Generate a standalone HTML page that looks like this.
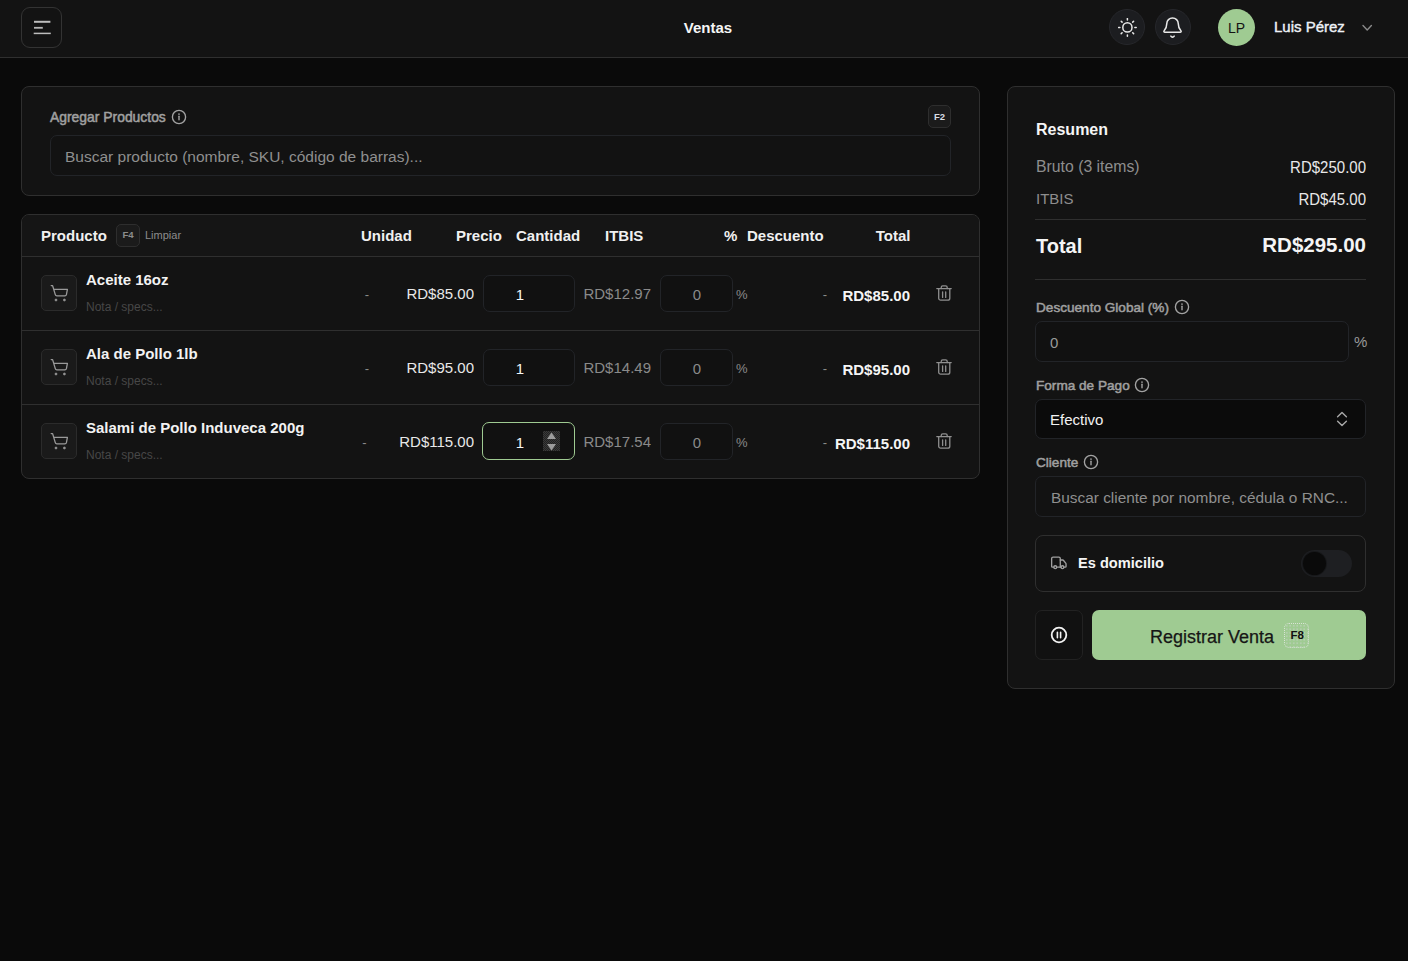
<!DOCTYPE html>
<html><head><meta charset="utf-8"><title>Ventas</title>
<style>
html,body{margin:0;padding:0;}
body{width:1408px;height:961px;overflow:hidden;background:#0a0a0a;position:relative;font-family:"Liberation Sans",sans-serif;}
.t{position:absolute;line-height:1;white-space:nowrap;}
.b{position:absolute;}
</style></head><body>
<div class="b" style="left:0px;top:0px;width:1408px;height:57px;background:#131313;"></div>
<div class="b" style="left:0px;top:57px;width:1408px;height:1px;background:#2f2f2f;"></div>
<div class="b" style="left:21px;top:7px;width:41px;height:41px;border:1px solid #333;border-radius:9px;box-sizing:border-box;"></div>
<svg class="b" style="left:33px;top:19px;" width="19" height="18" viewBox="0 0 19 18" fill="none"><path d="M1 2.8H17.4" stroke="#bdbdbd" stroke-width="2"/><path d="M1 8.8H9.8" stroke="#b5b5b5" stroke-width="1.8"/><path d="M0.7 14.4H17.8" stroke="#bdbdbd" stroke-width="1.5"/></svg>
<div class="t" style="left:708px;transform:translateX(-50%) ;top:20.00px;font-size:15px;font-weight:700;color:#f5f5f5;">Ventas</div>
<div class="b" style="left:1109px;top:9px;width:36px;height:36px;background:#1c1d20;border:1px solid #26272b;border-radius:50%;box-sizing:border-box;"></div>
<svg class="b" style="left:1118px;top:18px;" width="20" height="20" viewBox="0 0 20 20" fill="none"><circle cx="9.4" cy="9.4" r="4.6" stroke="#e8e8e8" stroke-width="1.5"/><line x1="16.90" y1="9.40" x2="18.20" y2="9.40" stroke="#e8e8e8" stroke-width="1.5" stroke-linecap="round"/><line x1="14.70" y1="14.70" x2="15.62" y2="15.62" stroke="#e8e8e8" stroke-width="1.5" stroke-linecap="round"/><line x1="9.40" y1="16.90" x2="9.40" y2="18.20" stroke="#e8e8e8" stroke-width="1.5" stroke-linecap="round"/><line x1="4.10" y1="14.70" x2="3.18" y2="15.62" stroke="#e8e8e8" stroke-width="1.5" stroke-linecap="round"/><line x1="1.90" y1="9.40" x2="0.60" y2="9.40" stroke="#e8e8e8" stroke-width="1.5" stroke-linecap="round"/><line x1="4.10" y1="4.10" x2="3.18" y2="3.18" stroke="#e8e8e8" stroke-width="1.5" stroke-linecap="round"/><line x1="9.40" y1="1.90" x2="9.40" y2="0.60" stroke="#e8e8e8" stroke-width="1.5" stroke-linecap="round"/><line x1="14.70" y1="4.10" x2="15.62" y2="3.18" stroke="#e8e8e8" stroke-width="1.5" stroke-linecap="round"/></svg>
<div class="b" style="left:1155px;top:9px;width:36px;height:36px;background:#1c1d20;border:1px solid #26272b;border-radius:50%;box-sizing:border-box;"></div>
<svg class="b" style="left:1160.8px;top:15.6px;" width="24" height="24" viewBox="0 0 24 24" fill="none"><g transform="scale(0.96)" stroke="#e8e8e8" stroke-width="1.6" stroke-linecap="round" stroke-linejoin="round"><path d="M10.268 21a2 2 0 0 0 3.464 0"/><path d="M3.262 15.326A1 1 0 0 0 4 17h16a1 1 0 0 0 .74-1.673C19.41 13.956 18 12.499 18 8A6 6 0 0 0 6 8c0 4.499-1.411 5.956-2.738 7.326"/></g></svg>
<div class="b" style="left:1218px;top:9px;width:37px;height:37px;background:#9fcb92;border-radius:50%;"></div>
<div class="t" style="left:1236.5px;transform:translateX(-50%) ;top:20.75px;font-size:14px;font-weight:400;color:#141414;">LP</div>
<div class="t" style="left:1274px;top:19.20px;font-size:15px;font-weight:400;color:#eef2f7;-webkit-text-stroke:0.4px #eef2f7;">Luis Pérez</div>
<svg class="b" style="left:1360px;top:22px;" width="14" height="12" viewBox="0 0 14 12" fill="none"><path d="M3 3.6L7.2 7.9L11.4 3.6" stroke="#8a8a8a" stroke-width="1.4" stroke-linecap="round" stroke-linejoin="round"/></svg>
<div class="b" style="left:21px;top:86px;width:959px;height:110px;background:#131313;border:1px solid #2f2f2f;border-radius:8px;box-sizing:border-box;"></div>
<div class="t" style="left:50px;top:110.93px;font-size:13.9px;font-weight:400;color:#a0a0a0;-webkit-text-stroke:0.5px #a0a0a0;">Agregar Productos</div>
<svg class="b" style="left:171px;top:109px;" width="16" height="16" viewBox="0 0 16 16" fill="none"><circle cx="8" cy="8" r="6.6" stroke="#a3a3a3" stroke-width="1.35"/><line x1="8" y1="7.3" x2="8" y2="10.8" stroke="#a3a3a3" stroke-width="1.4" stroke-linecap="round"/><circle cx="8" cy="5.1" r="0.85" fill="#a3a3a3"/></svg>
<div class="b" style="left:928px;top:105px;width:23px;height:23px;background:#1b1b1b;border:1px solid #2e2e2e;border-radius:5px;box-sizing:border-box;"></div>
<div class="t" style="left:939.5px;transform:translateX(-50%) ;top:112.16px;font-size:9.5px;font-weight:700;color:#d8dde5;">F2</div>
<div class="b" style="left:50px;top:135px;width:901px;height:41px;background:#121212;border:1px solid #222428;border-radius:7px;box-sizing:border-box;"></div>
<div class="t" style="left:65px;top:149.08px;font-size:15.5px;font-weight:400;color:#8f8f8f;">Buscar producto (nombre, SKU, código de barras)...</div>
<div class="b" style="left:21px;top:214px;width:959px;height:265px;background:#131313;border:1px solid #2f2f2f;border-radius:8px;box-sizing:border-box;"></div>
<div class="b" style="left:22px;top:215px;width:957px;height:41px;background:#151515;border-radius:7px 7px 0 0;"></div>
<div class="b" style="left:22px;top:256px;width:957px;height:1px;background:#2f2f2f;"></div>
<div class="b" style="left:22px;top:330px;width:957px;height:1px;background:#2f2f2f;"></div>
<div class="b" style="left:22px;top:404px;width:957px;height:1px;background:#2f2f2f;"></div>
<div class="t" style="left:41px;top:227.80px;font-size:15px;font-weight:700;color:#f0f0f0;">Producto</div>
<div class="b" style="left:116px;top:224px;width:24px;height:23px;background:#1b1b1b;border:1px solid #2e2e2e;border-radius:5px;box-sizing:border-box;"></div>
<div class="t" style="left:128px;transform:translateX(-50%) ;top:230.47px;font-size:9.6px;font-weight:700;color:#8c8c8c;">F4</div>
<div class="t" style="left:145px;top:230.19px;font-size:11px;font-weight:400;color:#8c8c8c;">Limpiar</div>
<div class="t" style="left:361px;top:227.80px;font-size:15px;font-weight:700;color:#f0f0f0;">Unidad</div>
<div class="t" style="left:456px;top:227.80px;font-size:15px;font-weight:700;color:#f0f0f0;">Precio</div>
<div class="t" style="left:516px;top:227.80px;font-size:15px;font-weight:700;color:#f0f0f0;">Cantidad</div>
<div class="t" style="left:605px;top:227.80px;font-size:15px;font-weight:700;color:#f0f0f0;">ITBIS</div>
<div class="t" style="left:724px;top:227.80px;font-size:15px;font-weight:700;color:#f0f0f0;">%</div>
<div class="t" style="left:747px;top:227.80px;font-size:15px;font-weight:700;color:#f0f0f0;">Descuento</div>
<div class="t" style="right:497.5px;top:227.80px;font-size:15px;font-weight:700;color:#f0f0f0;">Total</div>
<div class="b" style="left:41px;top:275px;width:36px;height:36px;background:#1a1a1a;border:1px solid #2b2b2b;border-radius:5px;box-sizing:border-box;"></div>
<svg class="b" style="left:41px;top:275px;" width="36" height="36" viewBox="0 0 36 36" fill="none"><path d="M10.2 10.6H11.6L14.3 19.6Q14.6 20.9 15.9 20.9H23.9Q25.1 20.9 25.4 19.7L26.4 14.4H13.3" stroke="#9a9a9a" stroke-width="1.3" stroke-linecap="round" stroke-linejoin="round"/><circle cx="15" cy="25" r="1.05" fill="#9a9a9a" stroke="#9a9a9a" stroke-width="0.6"/><circle cx="23.4" cy="25" r="1.05" fill="#9a9a9a" stroke="#9a9a9a" stroke-width="0.6"/></svg>
<div class="t" style="left:86px;top:272.30px;font-size:15px;font-weight:700;color:#f2f2f2;">Aceite 16oz</div>
<div class="t" style="left:86px;top:301.24px;font-size:12px;font-weight:400;color:#474747;">Nota / specs...</div>
<div class="t" style="left:367px;transform:translateX(-50%) ;top:288.00px;font-size:13px;font-weight:400;color:#8a8a8a;">-</div>
<div class="t" style="right:934px;transform:scaleY(1.03);top:286.00px;font-size:15px;font-weight:400;color:#e8e8e8;transform-origin:50% 12.70px;">RD$85.00</div>
<div class="b" style="left:483px;top:275px;width:92px;height:37px;background:#111111;border:1px solid #222428;border-radius:7px;box-sizing:border-box;"></div>
<div class="t" style="left:520px;transform:translateX(-50%) ;top:287.30px;font-size:15px;font-weight:400;color:#f5f5f5;">1</div>
<div class="t" style="right:757px;transform:scaleY(1.03);top:286.00px;font-size:15px;font-weight:400;color:#8a8a8a;transform-origin:50% 12.70px;">RD$12.97</div>
<div class="b" style="left:660px;top:275px;width:73px;height:37px;background:#111111;border:1px solid #222428;border-radius:7px;box-sizing:border-box;"></div>
<div class="t" style="left:697px;transform:translateX(-50%) ;top:287.30px;font-size:15px;font-weight:400;color:#8a8a8a;">0</div>
<div class="t" style="left:736px;top:288.00px;font-size:13px;font-weight:400;color:#8a8a8a;">%</div>
<div class="t" style="left:825px;transform:translateX(-50%) ;top:288.00px;font-size:13px;font-weight:400;color:#8a8a8a;">-</div>
<div class="t" style="right:498px;top:287.80px;font-size:15px;font-weight:700;color:#f5f5f5;">RD$85.00</div>
<svg class="b" style="left:934px;top:283px;" width="20" height="20" viewBox="0 0 20 20" fill="none"><g stroke="#8f8f8f" stroke-width="1.3" stroke-linecap="round" stroke-linejoin="round"><path d="M2.8 5.6H17.2"/><path d="M7.2 5.6V4.5A1.6 1.6 0 0 1 8.8 2.9H11.6A1.6 1.6 0 0 1 13.2 4.5V5.6"/><path d="M4.7 5.6V15.2A2 2 0 0 0 6.7 17.2H13.8A2 2 0 0 0 15.8 15.2V5.6"/><path d="M8.6 8.8V14.4M11.7 8.8V14.4"/></g></svg>
<div class="b" style="left:41px;top:349px;width:36px;height:36px;background:#1a1a1a;border:1px solid #2b2b2b;border-radius:5px;box-sizing:border-box;"></div>
<svg class="b" style="left:41px;top:349px;" width="36" height="36" viewBox="0 0 36 36" fill="none"><path d="M10.2 10.6H11.6L14.3 19.6Q14.6 20.9 15.9 20.9H23.9Q25.1 20.9 25.4 19.7L26.4 14.4H13.3" stroke="#9a9a9a" stroke-width="1.3" stroke-linecap="round" stroke-linejoin="round"/><circle cx="15" cy="25" r="1.05" fill="#9a9a9a" stroke="#9a9a9a" stroke-width="0.6"/><circle cx="23.4" cy="25" r="1.05" fill="#9a9a9a" stroke="#9a9a9a" stroke-width="0.6"/></svg>
<div class="t" style="left:86px;top:346.30px;font-size:15px;font-weight:700;color:#f2f2f2;">Ala de Pollo 1lb</div>
<div class="t" style="left:86px;top:375.24px;font-size:12px;font-weight:400;color:#474747;">Nota / specs...</div>
<div class="t" style="left:367px;transform:translateX(-50%) ;top:362.00px;font-size:13px;font-weight:400;color:#8a8a8a;">-</div>
<div class="t" style="right:934px;transform:scaleY(1.03);top:360.00px;font-size:15px;font-weight:400;color:#e8e8e8;transform-origin:50% 12.70px;">RD$95.00</div>
<div class="b" style="left:483px;top:349px;width:92px;height:37px;background:#111111;border:1px solid #222428;border-radius:7px;box-sizing:border-box;"></div>
<div class="t" style="left:520px;transform:translateX(-50%) ;top:361.30px;font-size:15px;font-weight:400;color:#f5f5f5;">1</div>
<div class="t" style="right:757px;transform:scaleY(1.03);top:360.00px;font-size:15px;font-weight:400;color:#8a8a8a;transform-origin:50% 12.70px;">RD$14.49</div>
<div class="b" style="left:660px;top:349px;width:73px;height:37px;background:#111111;border:1px solid #222428;border-radius:7px;box-sizing:border-box;"></div>
<div class="t" style="left:697px;transform:translateX(-50%) ;top:361.30px;font-size:15px;font-weight:400;color:#8a8a8a;">0</div>
<div class="t" style="left:736px;top:362.00px;font-size:13px;font-weight:400;color:#8a8a8a;">%</div>
<div class="t" style="left:825px;transform:translateX(-50%) ;top:362.00px;font-size:13px;font-weight:400;color:#8a8a8a;">-</div>
<div class="t" style="right:498px;top:361.80px;font-size:15px;font-weight:700;color:#f5f5f5;">RD$95.00</div>
<svg class="b" style="left:934px;top:357px;" width="20" height="20" viewBox="0 0 20 20" fill="none"><g stroke="#8f8f8f" stroke-width="1.3" stroke-linecap="round" stroke-linejoin="round"><path d="M2.8 5.6H17.2"/><path d="M7.2 5.6V4.5A1.6 1.6 0 0 1 8.8 2.9H11.6A1.6 1.6 0 0 1 13.2 4.5V5.6"/><path d="M4.7 5.6V15.2A2 2 0 0 0 6.7 17.2H13.8A2 2 0 0 0 15.8 15.2V5.6"/><path d="M8.6 8.8V14.4M11.7 8.8V14.4"/></g></svg>
<div class="b" style="left:41px;top:423px;width:36px;height:36px;background:#1a1a1a;border:1px solid #2b2b2b;border-radius:5px;box-sizing:border-box;"></div>
<svg class="b" style="left:41px;top:423px;" width="36" height="36" viewBox="0 0 36 36" fill="none"><path d="M10.2 10.6H11.6L14.3 19.6Q14.6 20.9 15.9 20.9H23.9Q25.1 20.9 25.4 19.7L26.4 14.4H13.3" stroke="#9a9a9a" stroke-width="1.3" stroke-linecap="round" stroke-linejoin="round"/><circle cx="15" cy="25" r="1.05" fill="#9a9a9a" stroke="#9a9a9a" stroke-width="0.6"/><circle cx="23.4" cy="25" r="1.05" fill="#9a9a9a" stroke="#9a9a9a" stroke-width="0.6"/></svg>
<div class="t" style="left:86px;top:420.30px;font-size:15px;font-weight:700;color:#f2f2f2;">Salami de Pollo Induveca 200g</div>
<div class="t" style="left:86px;top:449.24px;font-size:12px;font-weight:400;color:#474747;">Nota / specs...</div>
<div class="t" style="left:364.5px;transform:translateX(-50%) ;top:436.00px;font-size:13px;font-weight:400;color:#8a8a8a;">-</div>
<div class="t" style="right:934px;transform:scaleY(1.03);top:434.00px;font-size:15px;font-weight:400;color:#e8e8e8;transform-origin:50% 12.70px;">RD$115.00</div>
<div class="b" style="left:482px;top:422px;width:93px;height:38px;background:#111111;border:1px solid #9fcb92;border-radius:7px;box-sizing:border-box;"></div>
<div class="b" style="left:543px;top:431px;width:17px;height:20px;background-color:#2a2a2a;background-image:repeating-conic-gradient(#3a3a3a 0 25%, #222 0 50%);background-size:2px 2px;"></div>
<svg class="b" style="left:543px;top:431px;" width="17" height="20" viewBox="0 0 17 20" fill="none"><path d="M4 8L8.5 1.5L13 8Z" fill="#9c9c9c"/><path d="M4 13L8.5 19.5L13 13Z" fill="#9c9c9c"/></svg>
<div class="t" style="left:520px;transform:translateX(-50%) ;top:435.30px;font-size:15px;font-weight:400;color:#f5f5f5;">1</div>
<div class="t" style="right:757px;transform:scaleY(1.03);top:434.00px;font-size:15px;font-weight:400;color:#8a8a8a;transform-origin:50% 12.70px;">RD$17.54</div>
<div class="b" style="left:660px;top:423px;width:73px;height:37px;background:#111111;border:1px solid #222428;border-radius:7px;box-sizing:border-box;"></div>
<div class="t" style="left:697px;transform:translateX(-50%) ;top:435.30px;font-size:15px;font-weight:400;color:#8a8a8a;">0</div>
<div class="t" style="left:736px;top:436.00px;font-size:13px;font-weight:400;color:#8a8a8a;">%</div>
<div class="t" style="left:825px;transform:translateX(-50%) ;top:436.00px;font-size:13px;font-weight:400;color:#8a8a8a;">-</div>
<div class="t" style="right:498px;top:435.80px;font-size:15px;font-weight:700;color:#f5f5f5;">RD$115.00</div>
<svg class="b" style="left:934px;top:431px;" width="20" height="20" viewBox="0 0 20 20" fill="none"><g stroke="#8f8f8f" stroke-width="1.3" stroke-linecap="round" stroke-linejoin="round"><path d="M2.8 5.6H17.2"/><path d="M7.2 5.6V4.5A1.6 1.6 0 0 1 8.8 2.9H11.6A1.6 1.6 0 0 1 13.2 4.5V5.6"/><path d="M4.7 5.6V15.2A2 2 0 0 0 6.7 17.2H13.8A2 2 0 0 0 15.8 15.2V5.6"/><path d="M8.6 8.8V14.4M11.7 8.8V14.4"/></g></svg>
<div class="b" style="left:1007px;top:86px;width:388px;height:603px;background:#131313;border:1px solid #2f2f2f;border-radius:8px;box-sizing:border-box;"></div>
<div class="t" style="left:1036px;top:122.26px;font-size:16px;font-weight:700;color:#f5f5f5;">Resumen</div>
<div class="t" style="left:1036px;top:158.93px;font-size:15.8px;font-weight:400;color:#8e8e8e;">Bruto (3 items)</div>
<div class="t" style="right:42px;transform:scaleY(1.04);top:160.10px;font-size:15px;font-weight:400;color:#e8e8e8;transform-origin:50% 12.70px;">RD$250.00</div>
<div class="t" style="left:1036px;top:191.30px;font-size:15px;font-weight:400;color:#8e8e8e;">ITBIS</div>
<div class="t" style="right:42px;transform:scaleY(1.04);top:191.70px;font-size:15px;font-weight:400;color:#e8e8e8;transform-origin:50% 12.70px;">RD$45.00</div>
<div class="b" style="left:1035px;top:219px;width:331px;height:1px;background:#2f2f2f;"></div>
<div class="t" style="left:1036px;top:235.57px;font-size:20px;font-weight:700;color:#f5f5f5;">Total</div>
<div class="t" style="right:42px;top:235.15px;font-size:20.5px;font-weight:700;color:#f5f5f5;">RD$295.00</div>
<div class="b" style="left:1035px;top:279px;width:331px;height:1px;background:#2f2f2f;"></div>
<div class="t" style="left:1036px;top:301.49px;font-size:13.6px;font-weight:400;color:#a0a0a0;-webkit-text-stroke:0.5px #a0a0a0;">Descuento Global (%)</div>
<svg class="b" style="left:1174px;top:299px;" width="16" height="16" viewBox="0 0 16 16" fill="none"><circle cx="8" cy="8" r="6.6" stroke="#a3a3a3" stroke-width="1.35"/><line x1="8" y1="7.3" x2="8" y2="10.8" stroke="#a3a3a3" stroke-width="1.4" stroke-linecap="round"/><circle cx="8" cy="5.1" r="0.85" fill="#a3a3a3"/></svg>
<div class="b" style="left:1035px;top:321px;width:314px;height:41px;background:#111111;border:1px solid #222428;border-radius:7px;box-sizing:border-box;"></div>
<div class="t" style="left:1050px;top:335.10px;font-size:15px;font-weight:400;color:#9a9a9a;">0</div>
<div class="t" style="left:1354px;top:333.90px;font-size:15px;font-weight:400;color:#9a9a9a;">%</div>
<div class="t" style="left:1036px;top:379.19px;font-size:13.6px;font-weight:400;color:#a0a0a0;-webkit-text-stroke:0.5px #a0a0a0;">Forma de Pago</div>
<svg class="b" style="left:1133.5px;top:377px;" width="16" height="16" viewBox="0 0 16 16" fill="none"><circle cx="8" cy="8" r="6.6" stroke="#a3a3a3" stroke-width="1.35"/><line x1="8" y1="7.3" x2="8" y2="10.8" stroke="#a3a3a3" stroke-width="1.4" stroke-linecap="round"/><circle cx="8" cy="5.1" r="0.85" fill="#a3a3a3"/></svg>
<div class="b" style="left:1035px;top:399px;width:331px;height:40px;background:#0b0b0b;border:1px solid #222428;border-radius:7px;box-sizing:border-box;"></div>
<div class="t" style="left:1050px;top:411.90px;font-size:15px;font-weight:400;color:#f2f2f2;">Efectivo</div>
<svg class="b" style="left:1334px;top:410px;" width="16" height="18" viewBox="0 0 16 18" fill="none"><path d="M3.6 6.8L8 2.4L12.4 6.8M3.6 11.2L8 15.6L12.4 11.2" stroke="#a8a8a8" stroke-width="1.4" stroke-linecap="round" stroke-linejoin="round"/></svg>
<div class="t" style="left:1036px;top:456.49px;font-size:13.6px;font-weight:400;color:#a0a0a0;-webkit-text-stroke:0.5px #a0a0a0;">Cliente</div>
<svg class="b" style="left:1083px;top:454px;" width="16" height="16" viewBox="0 0 16 16" fill="none"><circle cx="8" cy="8" r="6.6" stroke="#a3a3a3" stroke-width="1.35"/><line x1="8" y1="7.3" x2="8" y2="10.8" stroke="#a3a3a3" stroke-width="1.4" stroke-linecap="round"/><circle cx="8" cy="5.1" r="0.85" fill="#a3a3a3"/></svg>
<div class="b" style="left:1035px;top:476px;width:331px;height:41px;background:#121212;border:1px solid #222428;border-radius:7px;box-sizing:border-box;"></div>
<div class="t" style="left:1051px;top:489.76px;font-size:15.4px;font-weight:400;color:#8f8f8f;">Buscar cliente por nombre, cédula o RNC...</div>
<div class="b" style="left:1035px;top:535px;width:331px;height:57px;border:1px solid #2f2f2f;border-radius:8px;box-sizing:border-box;"></div>
<svg class="b" style="left:1049px;top:553px;" width="20" height="20" viewBox="0 0 20 20" fill="none"><g transform="translate(1.2 1.2) scale(0.72)" stroke="#a0a0a0" stroke-width="1.85" stroke-linecap="round" stroke-linejoin="round"><path d="M14 18V6a2 2 0 0 0-2-2H4a2 2 0 0 0-2 2v11a1 1 0 0 0 1 1h2"/><path d="M15 18H9"/><path d="M19 18h2a1 1 0 0 0 1-1v-3.65a1 1 0 0 0-.22-.624l-3.48-4.35A1 1 0 0 0 17.52 8H14"/><circle cx="17" cy="18" r="2"/><circle cx="7" cy="18" r="2"/></g></svg>
<div class="t" style="left:1078px;top:556.04px;font-size:14.6px;font-weight:700;color:#f5f5f5;">Es domicilio</div>
<div class="b" style="left:1301px;top:550px;width:51px;height:27px;background:#1e1f22;border-radius:14px;"></div>
<div class="b" style="left:1303px;top:552px;width:23px;height:23px;background:#0a0a0a;border-radius:50%;box-shadow:0 0 0 1px #17181a;"></div>
<div class="b" style="left:1035px;top:610px;width:48px;height:50px;background:#111111;border:1px solid #222;border-radius:7px;box-sizing:border-box;"></div>
<svg class="b" style="left:1049px;top:625px;" width="20" height="20" viewBox="0 0 20 20" fill="none"><circle cx="10" cy="10" r="7.3" stroke="#f2f2f2" stroke-width="1.8"/><path d="M8.4 7.3V12.7M11.6 7.3V12.7" stroke="#f2f2f2" stroke-width="1.6" stroke-linecap="round"/></svg>
<div class="b" style="left:1092px;top:610px;width:274px;height:50px;background:#9fcb92;border-radius:7px;"></div>
<div class="t" style="left:1150px;top:627.56px;font-size:18px;font-weight:400;color:#161616;-webkit-text-stroke:0.25px #161616;">Registrar Venta</div>
<div class="b" style="left:1284px;top:623px;width:25px;height:25px;border:1px dotted #d8e3d5;border-radius:5px;box-sizing:border-box;background-image:radial-gradient(circle, rgba(200,210,200,0.55) 0.6px, transparent 0.9px);background-size:3.5px 3.5px;"></div>
<div class="t" style="left:1297.3px;transform:translateX(-50%) ;top:630.07px;font-size:11.5px;font-weight:700;color:#111;">F8</div>
</body></html>
